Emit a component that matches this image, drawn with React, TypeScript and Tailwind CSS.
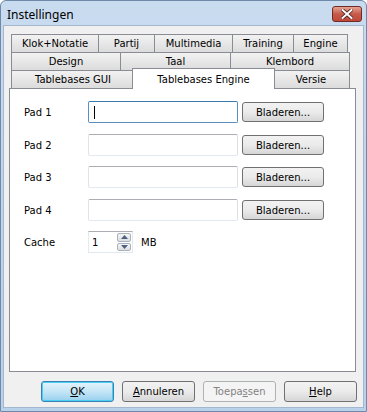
import React from "react";

const font = { fontFamily: "'DejaVu Sans', 'Liberation Sans', sans-serif" };

const row1 = [
  { label: "Klok+Notatie", w: "w-[88px]" },
  { label: "Partij", w: "w-[57px]" },
  { label: "Multimedia", w: "w-[79px]" },
  { label: "Training", w: "w-[62px]" },
  { label: "Engine", w: "w-[55px]" },
];

const row2 = [
  { label: "Design", w: "w-[110px]" },
  { label: "Taal", w: "w-[111px]" },
  { label: "Klembord", w: "w-[120px]" },
];

const Tab = ({ label, w }: { label: string; w: string }) => (
  <div
    className={`${w} h-[18px] shrink-0 flex items-center justify-center border border-b-0 border-[#898c95] bg-gradient-to-b from-[#f2f2f2] to-[#dcdcdc] text-[10px] text-black -ml-px first:ml-0`}
  >
    {label}
  </div>
);

const PathRow = ({ label, focused, mt }: { label: string; focused?: boolean; mt: string }) => (
  <div className={`flex items-center ${mt}`}>
    <div className="w-[64px] text-[10px] text-black">{label}</div>
    <div
      className={`w-[150px] h-[22px] bg-white border rounded-[2px] flex items-center pl-[5px] ${
        focused
          ? "border-[#5a8fc0] border-t-[#3d7bad]"
          : "border-[#e3e9ef] border-t-[#abadb3] border-l-[#e2e3ea] border-r-[#dbdfe6]"
      }`}
    >
      {focused && <div className="w-px h-[13px] bg-black" />}
    </div>
    <button className="ml-[4px] w-[82px] h-[20px] border border-[#707070] rounded-[3px] bg-gradient-to-b from-[#f2f2f2] via-[#ebebeb] to-[#d6d6d6] text-[10px] text-black flex items-center justify-center">
      Bladeren...
    </button>
  </div>
);

const DlgButton = ({
  children,
  kind,
}: {
  children: React.ReactNode;
  kind?: "default" | "disabled";
}) => {
  const cls =
    kind === "default"
      ? "border-[#3c7fb1] bg-gradient-to-b from-[#e5f4fc] via-[#c4e5f6] to-[#98d1ef] text-black shadow-[inset_0_0_0_1px_#48d0f4]"
      : kind === "disabled"
      ? "border-[#adb2b5] bg-[#f4f4f4] text-[#838383]"
      : "border-[#707070] bg-gradient-to-b from-[#f2f2f2] via-[#ebebeb] to-[#d6d6d6] text-black";
  return (
    <button
      className={`w-[73px] h-[21px] border rounded-[3px] text-[10px] flex items-center justify-center ${cls}`}
    >
      {children}
    </button>
  );
};

export default function App() {
  return (
    <div
      className="w-[367px] h-[412px] flex flex-col bg-gradient-to-b from-[#c9dbef] via-[#bed4ec] to-[#b9d1ea] border border-[#6f8aa8] rounded-t-[6px]"
      style={font}
    >
      {/* title bar */}
      <div className="h-[24px] flex items-center justify-between pl-[6px] pr-[4px]">
        <span
          className="text-[12px] text-black mt-[3px]"
          style={{ fontFamily: "'Noto Sans', 'Liberation Sans', sans-serif" }}
        >
          Instellingen
        </span>
        <div className="w-[30px] h-[16px] mt-[2px] rounded-[3px] border border-[#6e2c26] bg-gradient-to-b from-[#e7a294] via-[#c75a4a] to-[#c0483a] flex items-center justify-center">
          <svg width="12" height="10" viewBox="0 0 12 10">
            <path
              d="M1.5 1 L10.5 9 M10.5 1 L1.5 9"
              stroke="#4a1c18"
              strokeWidth="3.6"
              strokeLinecap="square"
            />
            <path
              d="M1.5 1 L10.5 9 M10.5 1 L1.5 9"
              stroke="#ffffff"
              strokeWidth="2"
              strokeLinecap="square"
            />
          </svg>
        </div>
      </div>

      {/* client area */}
      <div className="flex-1 mx-[2px] mb-[3px] bg-[#f0f0f0] border border-[#a3b7cf] flex flex-col pl-[5px] pr-[6px] pt-[8px]">
        <div className="ml-[2px] flex flex-col">
          <div className="flex">
            {row1.map((t) => (
              <Tab key={t.label} {...t} />
            ))}
          </div>
          <div className="flex">
            {row2.map((t) => (
              <Tab key={t.label} {...t} />
            ))}
          </div>
          <div className="flex h-[18px] items-end">
            <Tab label="Tablebases GUI" w="w-[124px]" />
            <div className="relative z-10 -ml-[3px] -mr-[2px] w-[143px] h-[21px] shrink-0 -mb-[1px] bg-white border border-b-0 border-[#898c95] flex items-start justify-center pt-[3px] text-[10px] text-black">
              Tablebases Engine
            </div>
            <Tab label="Versie" w="w-[78px]" />
          </div>
        </div>

        {/* panel */}
        <div className="w-[347px] h-[284px] bg-white border border-[#898c95] pl-[14px] pt-[12px] flex flex-col">
          <PathRow label="Pad 1" focused mt="mt-0" />
          <PathRow label="Pad 2" mt="mt-[11px]" />
          <PathRow label="Pad 3" mt="mt-[10px]" />
          <PathRow label="Pad 4" mt="mt-[11px]" />
          <div className="flex items-center mt-[10px]">
            <div className="w-[64px] text-[10px] text-black">Cache</div>
            <div className="w-[45px] h-[22px] bg-white border border-[#e3e9ef] border-t-[#abadb3] flex items-center">
              <span className="flex-1 pl-[3px] text-[10px] text-black">1</span>
              <div className="w-[16px] h-full flex flex-col gap-px p-px">
                <div className="flex-1 border border-[#a9b3bf] rounded-[2px] bg-gradient-to-b from-[#f5f5f5] to-[#dedede] flex items-center justify-center">
                  <svg width="7" height="4" viewBox="0 0 7 4">
                    <path d="M0 4 L3.5 0 L7 4 Z" fill="#4d6185" />
                  </svg>
                </div>
                <div className="flex-1 border border-[#a9b3bf] rounded-[2px] bg-gradient-to-b from-[#f5f5f5] to-[#dedede] flex items-center justify-center">
                  <svg width="7" height="4" viewBox="0 0 7 4">
                    <path d="M0 0 L3.5 4 L7 0 Z" fill="#4d6185" />
                  </svg>
                </div>
              </div>
            </div>
            <span className="ml-[8px] text-[10px] text-black">MB</span>
          </div>
        </div>

        {/* buttons */}
        <div className="flex justify-end gap-[8px] mt-[9px]">
          <DlgButton kind="default">
            <span className="underline">O</span>K
          </DlgButton>
          <DlgButton>
            <span className="underline">A</span>nnuleren
          </DlgButton>
          <DlgButton kind="disabled">
            Toepa<span className="underline">s</span>sen
          </DlgButton>
          <DlgButton>
            <span className="underline">H</span>elp
          </DlgButton>
        </div>
      </div>
    </div>
  );
}
